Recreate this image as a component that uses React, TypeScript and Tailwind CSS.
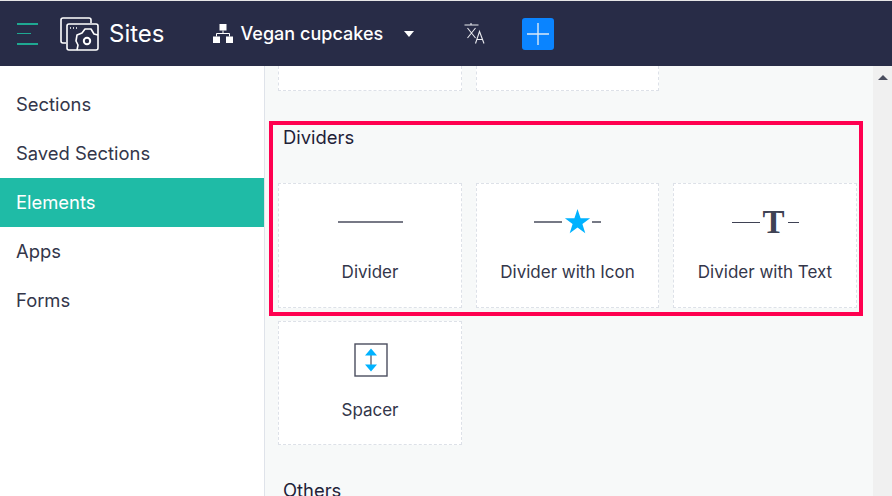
const NAV_ITEMS = ['Sections', 'Saved Sections', 'Elements', 'Apps', 'Forms']

function SitesIcon() {
  return (
    <svg width="39" height="34" viewBox="0 0 39 34" fill="none" stroke="white" strokeWidth="1.6" strokeLinejoin="round">
      <path d="M6 26H3a2 2 0 0 1-2-2V3a2 2 0 0 1 2-2h26a2 2 0 0 1 2 2v3" />
      <rect x="7" y="7" width="31" height="26" rx="2" />
      <path d="M10 11h1M13 11h1M16 11h1" />
      <path d="M38 18l-4-1-3-5h-6l-3 4-5 2-1 6 2 4-1 5" />
      <circle cx="27" cy="24" r="3.2" strokeWidth="2" />
    </svg>
  )
}

function OrgIcon() {
  return (
    <svg width="20" height="19" viewBox="0 0 20 19" fill="white">
      <rect x="6.5" y="0" width="7" height="6.5" />
      <rect x="0" y="12.5" width="7" height="6.5" />
      <rect x="13" y="12.5" width="7" height="6.5" />
      <path d="M10 6.5v3M3.5 12.5V9.5h13v3" fill="none" stroke="white" strokeWidth="1" />
    </svg>
  )
}

function TranslateIcon() {
  return (
    <svg width="21" height="21" viewBox="0 0 21 21" fill="none" stroke="#e8e9ee" strokeWidth="1.1">
      <path d="M0.5 2h14M7 0v2" />
      <path d="M3.5 5l8 10M11.5 5l-8 10" />
      <path d="M11.5 20.5l4-12 4.5 12M13 16.5h6" />
    </svg>
  )
}

function DividerIcon() {
  return (
    <svg width="65" height="26" viewBox="0 0 65 26">
      <path d="M0 13h65" stroke="#4a4d5e" strokeWidth="1.4" />
    </svg>
  )
}

function DividerStarIcon() {
  return (
    <svg width="67" height="26" viewBox="0 0 67 26">
      <path d="M0 13h28M58 13h9" stroke="#4a4d5e" strokeWidth="1.4" />
      <path d="M43.500 0l3.100 9.200h9.500l-7.700 5.700 2.900 9.300-7.800-5.700-7.800 5.700 2.900-9.300-7.700-5.700h9.500z" fill="#00b2ff" />
    </svg>
  )
}

function DividerTextIcon() {
  return (
    <div className="flex items-center h-[26px] w-[67px]">
      <span className="h-px w-[28px] bg-[#3f4254]" />
      <span className="w-[28px] text-center text-[33px] leading-[26px] font-bold text-[#3f4254] font-['Liberation_Serif',serif]">T</span>
      <span className="h-px w-[11px] bg-[#3f4254]" />
    </div>
  )
}

function SpacerIcon() {
  return (
    <svg width="34" height="34" viewBox="0 0 34 34" fill="none" className="ml-[2px]">
      <rect x="1" y="1" width="32" height="32" stroke="#4a4d5e" strokeWidth="1.4" />
      <path d="M17 9v16" stroke="#4a4d5e" strokeWidth="1.2" />
      <path d="M17 5.500l6 7h-12zM17 28.500l6-7h-12z" fill="#00b2ff" />
    </svg>
  )
}

function ElementCard({ label, icon }: { label: string; icon: React.ReactNode }) {
  return (
    <div className="flex flex-col items-center h-full bg-white border border-dashed border-[#dde1e8]">
      <div className="flex items-center justify-center h-[26px] mt-[25px]">{icon}</div>
      <span className="mt-[25px] text-[17px] leading-[24px] text-[#33364a]">{label}</span>
    </div>
  )
}

export default function App() {
  return (
    <div className="flex flex-col w-[892px] h-[496px] overflow-hidden bg-white font-['Inter',sans-serif]">
      <div className="h-px bg-[#e6e6e6]" />

      {/* Header */}
      <header className="flex items-center h-[65px] bg-[#282c47] text-white">
        <div className="flex flex-col gap-[8.500px] ml-[17px] w-[21px]">
          <span className="h-[2px] w-[21px] bg-[#1fa892]" />
          <span className="h-px w-[14px] bg-[#1fa892]" />
          <span className="h-[2px] w-[21px] bg-[#1fa892]" />
        </div>
        <div className="ml-[22px]">
          <SitesIcon />
        </div>
        <span className="ml-[10px] text-[24px] leading-none">Sites</span>
        <div className="ml-[48px]">
          <OrgIcon />
        </div>
        <span className="ml-[8px] text-[18px] font-medium leading-none tracking-[0.02px]">Vegan cupcakes</span>
        <span className="ml-[21px] border-x-[5px] border-t-[6px] border-x-transparent border-t-white" />
        <div className="ml-[50px]">
          <TranslateIcon />
        </div>
        <button className="flex items-center justify-center ml-[37px] w-[32px] h-[32px] rounded-[3px] bg-[#0a84ff]">
          <svg width="22" height="22" viewBox="0 0 22 22" stroke="#dbe9f7" strokeWidth="1.4">
            <path d="M11 0v22M0 11h22" />
          </svg>
        </button>
      </header>

      <div className="flex flex-1 min-h-0">
        {/* Sidebar */}
        <nav className="w-[265px] shrink-0 pt-[14px] bg-white border-r border-[#dfe3ea]">
          {NAV_ITEMS.map(item => (
            <div
              key={item}
              className={`flex items-center h-[49px] pl-[16px] text-[18.4px] ${
                item === 'Elements' ? 'bg-[#1fbba6] text-white' : 'text-[#33364a]'
              }`}
            >
              {item}
            </div>
          ))}
        </nav>

        {/* Element list */}
        <main className="flex-1 min-w-0 overflow-hidden pl-[13px] pr-[16px] bg-[#f7f9f9]">
          <div className="grid grid-cols-[184px_183px_184px] gap-x-[14px]">
            <div className="h-[25px] bg-white border-x border-b border-dashed border-[#dde1e8]" />
            <div className="h-[25px] bg-white border-x border-b border-dashed border-[#dde1e8]" />
          </div>

          <div className="relative mt-[31px]">
            <div className="absolute -left-[9px] -right-[6px] -top-[1px] h-[195px] border-[4px] border-[#ff0050]" />
            <h3 className="pt-[3px] pl-[5px] text-[18.4px] leading-[24px] text-[#1f2238]">Dividers</h3>
            <div className="grid grid-cols-[184px_183px_184px] grid-rows-[125px_124px] gap-x-[14px] gap-y-[13px] mt-[34px]">
              <ElementCard label="Divider" icon={<DividerIcon />} />
              <ElementCard label="Divider with Icon" icon={<DividerStarIcon />} />
              <ElementCard label="Divider with Text" icon={<DividerTextIcon />} />
              <ElementCard label="Spacer" icon={<SpacerIcon />} />
            </div>
            <h3 className="mt-[33px] pl-[5px] text-[18.4px] leading-[24px] text-[#1f2238]">Others</h3>
          </div>
        </main>

        {/* Scrollbar */}
        <div className="flex justify-center w-[19px] shrink-0 pt-[9px] bg-[#f0f0f0]">
          <span className="h-0 border-x-[5px] border-b-[5px] border-x-transparent border-b-[#4a4d5e]" />
        </div>
      </div>
    </div>
  )
}
